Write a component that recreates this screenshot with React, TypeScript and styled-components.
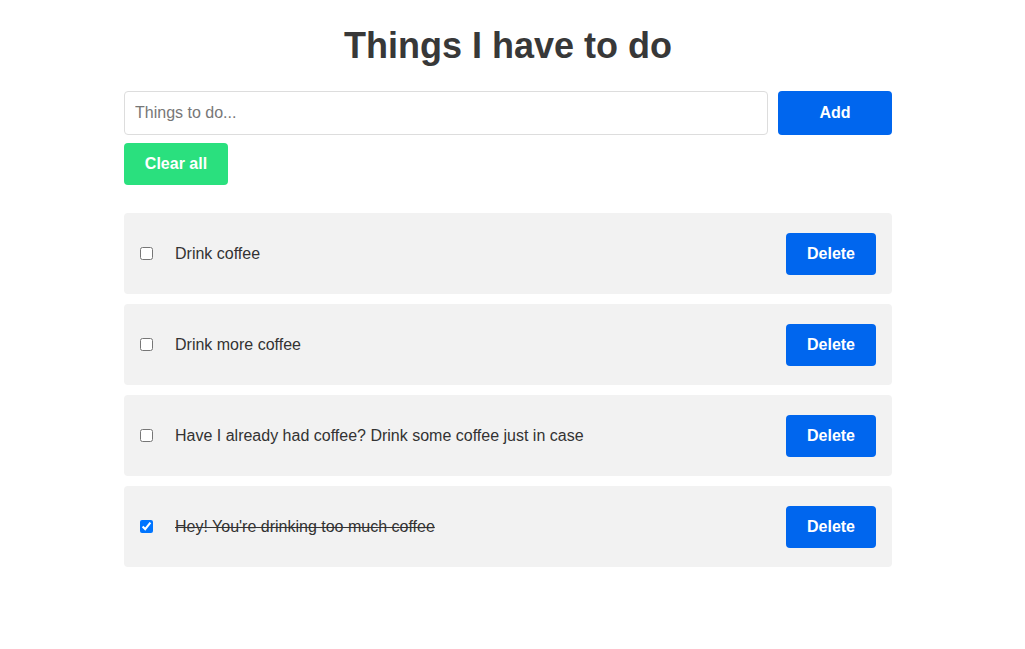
import React, { useState } from "react";
import styled, { createGlobalStyle } from "styled-components";

const GlobalStyle = createGlobalStyle`
  body {
    margin: 0;
    background: #ffffff;
    font-family: "Liberation Sans", Arial, sans-serif;
    color: #333333;
  }
`;

type Todo = {
  id: number;
  text: string;
  done: boolean;
};

const initialTodos: Todo[] = [
  { id: 1, text: "Drink coffee", done: false },
  { id: 2, text: "Drink more coffee", done: false },
  { id: 3, text: "Have I already had coffee? Drink some coffee just in case", done: false },
  { id: 4, text: "Hey! You're drinking too much coffee", done: true },
];

const Page = styled.div`
  width: 1016px;
`;

const Container = styled.main`
  width: 768px;
  margin: 0 auto;
  padding-top: 24px;
`;

const Title = styled.h1`
  margin: 0 0 24px;
  text-align: center;
  font-size: 36px;
  line-height: 43px;
  font-weight: bold;
  color: #383838;
`;

const AddRow = styled.form`
  display: flex;
  gap: 10px;
`;

const TextInput = styled.input`
  flex: 1;
  height: 44px;
  box-sizing: border-box;
  border: 1px solid #dddddd;
  border-radius: 4px;
  padding: 0 10px;
  font-family: inherit;
  font-size: 16px;
  color: #333333;
  outline: none;

  &::placeholder {
    color: #777777;
  }
`;

const Button = styled.button<{ $variant?: "blue" | "green"; $width: number; $height: number }>`
  width: ${(p) => p.$width}px;
  height: ${(p) => p.$height}px;
  border: none;
  border-radius: 4px;
  background: ${(p) => (p.$variant === "green" ? "#2ae07e" : "#0066ee")};
  color: #ffffff;
  font-family: inherit;
  font-size: 16px;
  font-weight: bold;
  cursor: pointer;
  flex-shrink: 0;
`;

const ClearRow = styled.div`
  margin-top: 8px;
`;

const List = styled.ul`
  list-style: none;
  margin: 28px 0 0;
  padding: 0;
  display: flex;
  flex-direction: column;
  gap: 10px;
`;

const Item = styled.li`
  display: flex;
  align-items: center;
  height: 81px;
  box-sizing: border-box;
  padding: 0 16px;
  background: #f2f2f2;
  border-radius: 4px;
`;

const Check = styled.input`
  width: 13px;
  height: 13px;
  margin: 0;
  accent-color: #0075ff;
`;

const ItemText = styled.span<{ $done: boolean }>`
  flex: 1;
  margin-left: 22px;
  font-size: 16px;
  color: #333333;
  text-decoration: ${(p) => (p.$done ? "line-through" : "none")};
`;

export default function App() {
  const [todos, setTodos] = useState<Todo[]>(initialTodos);
  const [value, setValue] = useState("");

  const add = (e: React.FormEvent) => {
    e.preventDefault();
    if (!value.trim()) return;
    setTodos([...todos, { id: Date.now(), text: value, done: false }]);
    setValue("");
  };

  const toggle = (id: number) =>
    setTodos(todos.map((t) => (t.id === id ? { ...t, done: !t.done } : t)));

  const remove = (id: number) => setTodos(todos.filter((t) => t.id !== id));

  return (
    <Page>
      <GlobalStyle />
      <Container>
        <Title>Things I have to do</Title>
        <AddRow onSubmit={add}>
          <TextInput
            placeholder="Things to do..."
            value={value}
            onChange={(e) => setValue(e.target.value)}
          />
          <Button type="submit" $width={114} $height={44}>
            Add
          </Button>
        </AddRow>
        <ClearRow>
          <Button type="button" $variant="green" $width={104} $height={42} onClick={() => setTodos([])}>
            Clear all
          </Button>
        </ClearRow>
        <List>
          {todos.map((t) => (
            <Item key={t.id}>
              <Check type="checkbox" checked={t.done} onChange={() => toggle(t.id)} />
              <ItemText $done={t.done}>{t.text}</ItemText>
              <Button type="button" $width={90} $height={42} onClick={() => remove(t.id)}>
                Delete
              </Button>
            </Item>
          ))}
        </List>
      </Container>
    </Page>
  );
}
